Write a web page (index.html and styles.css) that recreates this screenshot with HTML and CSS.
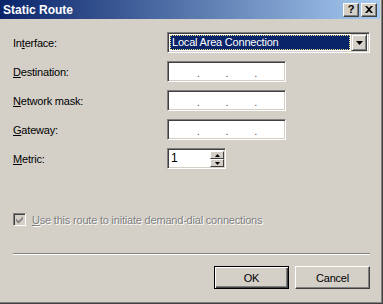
FILE: index.html
```html
<!DOCTYPE html>
<html lang="en">
<head>
    <meta charset="UTF-8">
    <title>Static Route</title>
    <link rel="stylesheet" href="styles.css">
</head>
<body>
    <div class="window">
        <div class="titlebar">
            <span class="title">Static Route</span>
            <div class="tb-btns">
                <span class="tb-btn tb-help">?</span>
                <span class="tb-btn">
                    <svg width="8" height="7" viewBox="0 0 8 7"><path d="M0 0h2l2 2 2-2h2L5 3.5 8 7H6L4 5 2 7H0l3-3.5z" fill="#000"/></svg>
                </span>
            </div>
        </div>
        <div class="content">
            <div class="form">
                <label>In<u>t</u>erface:</label>
                <div class="select">
                    <span class="sel-text">Local Area Connection</span>
                    <span class="sel-btn">
                        <svg width="7" height="4" viewBox="0 0 7 4"><path d="M0 0h7L3.5 4z" fill="#000"/></svg>
                    </span>
                </div>

                <label><u>D</u>estination:</label>
                <div class="field ip"><span></span><i>.</i><span></span><i>.</i><span></span><i>.</i><span></span></div>

                <label><u>N</u>etwork mask:</label>
                <div class="field ip"><span></span><i>.</i><span></span><i>.</i><span></span><i>.</i><span></span></div>

                <label><u>G</u>ateway:</label>
                <div class="field ip"><span></span><i>.</i><span></span><i>.</i><span></span><i>.</i><span></span></div>

                <label><u>M</u>etric:</label>
                <div class="spin">
                    <div class="field metric">1</div>
                    <div class="spin-btns">
                        <span class="spin-btn"><svg width="5" height="3" viewBox="0 0 5 3"><path d="M2.5 0L5 3H0z" fill="#000"/></svg></span>
                        <span class="spin-btn"><svg width="5" height="3" viewBox="0 0 5 3"><path d="M0 0h5L2.5 3z" fill="#000"/></svg></span>
                    </div>
                </div>
            </div>

            <div class="check-row">
                <span class="checkbox">
                    <svg width="9" height="9" viewBox="0 0 9 9"><path d="M1 3.5l2.5 2.5L8 1.5V4L3.5 8.5 1 6z" fill="#808080"/></svg>
                </span>
                <span class="disabled"><u>U</u>se this route to initiate demand-dial connections</span>
            </div>

            <div class="sep"></div>

            <div class="buttons">
                <button class="btn default">OK</button>
                <button class="btn">Cancel</button>
            </div>
        </div>
    </div>
</body>
</html>
```

FILE: styles.css
```css
html, body {
    margin: 0;
    padding: 0;
}
body {
    font-family: "Liberation Sans", Arial, sans-serif;
    font-size: 11px;
    letter-spacing: -0.2px;
    color: #000;
    background: #d4d0c8;
}
.window {
    width: 383px;
    height: 304px;
    box-sizing: border-box;
    padding: 0 3px 3px 0;
    background: #d4d0c8;
    box-shadow: inset -1px -1px #404040, inset -2px -2px #808080;
}
.titlebar {
    height: 19px;
    display: flex;
    align-items: center;
    justify-content: space-between;
    background: linear-gradient(to right, #0a246a, #a6caf0);
    padding: 0 3px 0 3px;
}
.title {
    color: #fff;
    font-weight: bold;
    font-size: 12px;
    letter-spacing: 0;
}
.tb-btns {
    display: flex;
    gap: 2px;
}
.tb-btn {
    width: 16px;
    height: 14px;
    box-sizing: border-box;
    display: flex;
    align-items: center;
    justify-content: center;
    background: #d4d0c8;
    border-top: 1px solid #fff;
    border-left: 1px solid #fff;
    border-right: 1px solid #404040;
    border-bottom: 1px solid #404040;
    box-shadow: inset -1px -1px #808080;
}
.tb-help {
    font-weight: bold;
    font-size: 11px;
    line-height: 1;
}
.content {
    padding: 13px 10px 0 13px;
}
.form {
    display: grid;
    grid-template-columns: 154px 1fr;
    grid-auto-rows: 21px;
    row-gap: 8px;
    align-items: center;
}
.form label u,
.disabled u {
    text-decoration: underline;
}
.field {
    box-sizing: border-box;
    height: 21px;
    background: #fff;
    border-top: 1px solid #808080;
    border-left: 1px solid #808080;
    border-right: 1px solid #fff;
    border-bottom: 1px solid #fff;
    box-shadow: inset 1px 1px #404040, inset -1px -1px #d4d0c8;
}
.ip {
    width: 119px;
    display: flex;
    align-items: center;
    padding: 0 2px;
}
.ip span {
    width: 27px;
}
.ip i {
    font-style: normal;
    width: 2px;
    color: #555;
    position: relative;
    top: 1px;
}
.select {
    box-sizing: border-box;
    width: 203px;
    height: 21px;
    display: flex;
    align-items: center;
    background: #fff;
    border-top: 1px solid #808080;
    border-left: 1px solid #808080;
    border-right: 1px solid #fff;
    border-bottom: 1px solid #fff;
    box-shadow: inset 1px 1px #404040, inset -1px -1px #d4d0c8;
    padding: 2px;
}
.sel-text {
    flex: 1;
    height: 15px;
    line-height: 13px;
    box-sizing: border-box;
    margin-right: 1px;
    background: #0a246a;
    color: #fff;
    padding-left: 1px;
    border: 1px dotted #f0e68c;
}
.sel-btn {
    width: 16px;
    height: 17px;
    box-sizing: border-box;
    display: flex;
    align-items: center;
    justify-content: center;
    background: #d4d0c8;
    border-top: 1px solid #d4d0c8;
    border-left: 1px solid #d4d0c8;
    border-right: 1px solid #404040;
    border-bottom: 1px solid #404040;
    box-shadow: inset 1px 1px #fff, inset -1px -1px #808080;
}
.spin {
    display: flex;
    height: 21px;
}
.metric {
    width: 43px;
    padding-left: 3px;
    line-height: 19px;
    font-size: 12px;
    border-right: none;
    box-shadow: inset 1px 1px #404040, inset 0 -1px #d4d0c8;
}
.spin-btns {
    display: flex;
    flex-direction: column;
    box-sizing: border-box;
    width: 16px;
    height: 21px;
    padding: 2px 1px 1px 0;
    background: #fff;
    border-top: 1px solid #808080;
    border-right: 1px solid #fff;
    border-bottom: 1px solid #fff;
    box-shadow: inset 0 1px #404040, inset -1px -1px #d4d0c8;
}
.spin-btn {
    flex: 1;
    display: flex;
    align-items: center;
    justify-content: center;
    box-sizing: border-box;
    background: #d4d0c8;
    border-top: 1px solid #fff;
    border-left: 1px solid #fff;
    border-right: 1px solid #404040;
    border-bottom: 1px solid #404040;
}
.check-row {
    display: flex;
    align-items: center;
    margin-top: 44px;
    height: 13px;
}
.checkbox {
    width: 13px;
    height: 13px;
    box-sizing: border-box;
    display: flex;
    align-items: center;
    justify-content: center;
    background: #d4d0c8;
    border-top: 1px solid #808080;
    border-left: 1px solid #808080;
    border-right: 1px solid #fff;
    border-bottom: 1px solid #fff;
    box-shadow: inset 1px 1px #404040, inset -1px -1px #d4d0c8;
    margin-right: 6px;
}
.disabled {
    color: #808080;
    text-shadow: 1px 1px #fff;
}
.sep {
    margin-top: 27px;
    height: 0;
    border-top: 1px solid #808080;
    border-bottom: 1px solid #fff;
}
.buttons {
    display: flex;
    justify-content: flex-end;
    gap: 6px;
    margin-top: 11px;
}
.btn {
    width: 75px;
    height: 23px;
    box-sizing: border-box;
    font-family: "Liberation Sans", Arial, sans-serif;
    font-size: 11px;
    letter-spacing: -0.2px;
    color: #000;
    background: #d4d0c8;
    border-top: 1px solid #fff;
    border-left: 1px solid #fff;
    border-right: 1px solid #404040;
    border-bottom: 1px solid #404040;
    box-shadow: inset -1px -1px #808080;
    padding: 0;
}
.btn.default {
    border: 1px solid #000;
    box-shadow: inset 1px 1px #fff, inset -1px -1px #404040, inset -2px -2px #808080;
}
```
